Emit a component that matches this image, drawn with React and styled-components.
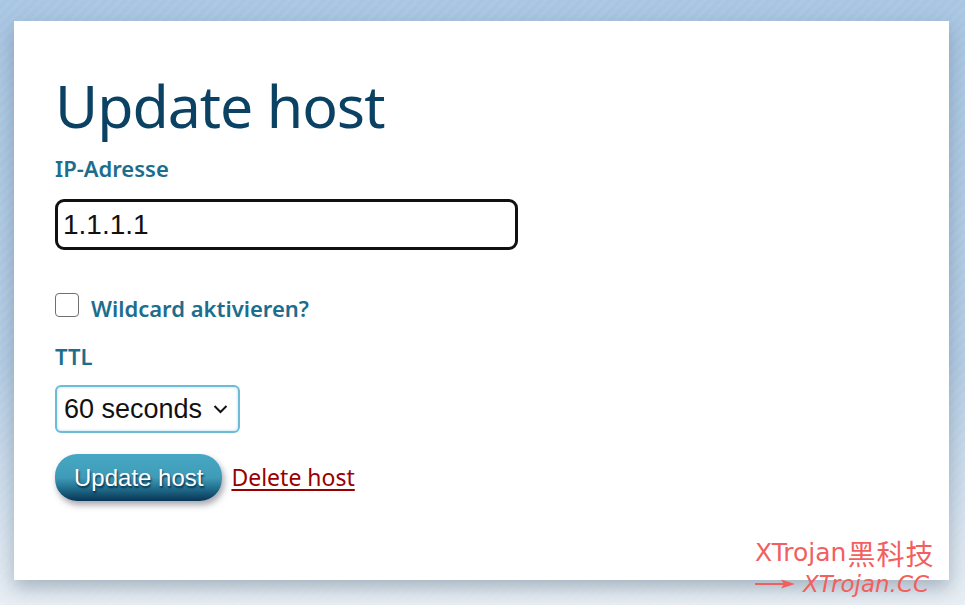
import React from 'react';
import styled, { createGlobalStyle } from 'styled-components';

const GlobalStyle = createGlobalStyle`
  html, body {
    margin: 0;
    padding: 0;
    height: 100%;
  }
  body {
    font-family: "Noto Sans", "Open Sans", sans-serif;
    background:
      repeating-linear-gradient(135deg, rgba(255,255,255,0.06) 0 3px, rgba(255,255,255,0) 3px 7px),
      linear-gradient(180deg, #a8c5e2 0%, #b3cce4 60%, #e8eef4 100%);
    overflow: hidden;
  }
`;

const Page = styled.div`
  width: 965px;
  height: 605px;
  padding: 21px 16px 0 14px;
  box-sizing: border-box;
  position: relative;
`;

const Card = styled.main`
  background: #ffffff;
  height: 559px;
  box-sizing: border-box;
  padding: 49px 41px 0;
  box-shadow: 0 8px 18px rgba(90, 110, 130, 0.45);
`;

const Title = styled.h1`
  margin: 0 0 14px;
  font-family: "Noto Sans", sans-serif;
  font-weight: 400;
  font-size: 59px;
  line-height: 70px;
  letter-spacing: -1px;
  color: #0b4263;
`;

const Label = styled.label`
  display: block;
  font-family: "Noto Sans", sans-serif;
  font-weight: 600;
  font-size: 22px;
  line-height: 28px;
  color: #1d6d8d;
  margin-top: ${p => p.$top || 0}px;
`;

const TextInput = styled.input`
  display: block;
  width: 463px;
  height: 51px;
  box-sizing: border-box;
  margin-top: 17px;
  border: 3.5px solid #111;
  border-radius: 9px;
  padding: 0 5px;
  font-family: "Liberation Sans", Arial, sans-serif;
  font-size: 28px;
  color: #111;
  outline: none;
`;

const CheckRow = styled.div`
  display: flex;
  align-items: flex-start;
  gap: 12px;
  margin-top: 44px;
`;

const Checkbox = styled.span`
  width: 24px;
  height: 24px;
  border: 1.5px solid #707070;
  border-radius: 4px;
  box-sizing: border-box;
  margin-top: -1px;
`;

const CheckLabel = styled(Label)`
  margin: 0;
`;

const Select = styled.div`
  display: inline-flex;
  align-items: center;
  gap: 11px;
  margin-top: 15px;
  height: 48px;
  box-sizing: border-box;
  border: 2px solid #6cbcd8;
  border-radius: 6px;
  padding: 0 10px 0 7px;
  font-family: "Liberation Sans", Arial, sans-serif;
  font-size: 27px;
  color: #111;
  box-shadow: inset 0 0 3px rgba(108, 188, 216, 0.6);
`;

const Actions = styled.div`
  display: flex;
  align-items: center;
  gap: 9px;
  margin-top: 21px;
`;

const Button = styled.button`
  height: 47px;
  padding: 0 19px;
  border: none;
  border-radius: 22px;
  background: linear-gradient(180deg, #47a7c2 0%, #3f9cb8 50%, #23718f 72%, #083555 100%);
  color: #fff;
  font-family: "Liberation Sans", Arial, sans-serif;
  font-size: 24px;
  text-shadow: 1px 2px 2px rgba(0, 40, 70, 0.9);
  box-shadow: 2px 4px 6px rgba(60, 60, 80, 0.45);
`;

const DeleteLink = styled.a`
  font-family: "Noto Sans", sans-serif;
  font-size: 23px;
  color: #990000;
  text-decoration: underline;
  text-underline-offset: 3px;
  margin-top: -2px;
`;

const Watermark = styled.div`
  position: absolute;
  left: 755px;
  top: 537px;
  color: #f25f5f;
  font-family: "DejaVu Sans", "Noto Sans CJK SC", sans-serif;
`;

const MarkLine = styled.div`
  display: flex;
  align-items: center;
  gap: ${p => (p.$italic ? 8 : 0)}px;
  height: 31px;
  font-size: ${p => (p.$italic ? 23 : 25)}px;
  font-style: ${p => (p.$italic ? 'italic' : 'normal')};
  white-space: nowrap;
`;

const Cjk = styled.span`
  font-family: "Noto Sans CJK SC", sans-serif;
  font-size: 28px;
  letter-spacing: 1px;
  margin-left: 1px;
`;

const Chevron = () => (
  <svg width="15" height="10" viewBox="0 0 15 10">
    <path d="M1.5 2 L7.5 8 L13.5 2" fill="none" stroke="#111" strokeWidth="2" />
  </svg>
);

const Arrow = () => (
  <svg width="40" height="12" viewBox="0 0 40 12">
    <path d="M0 6 H34" stroke="#f25f5f" strokeWidth="2" />
    <path d="M26 1.5 L40 6 L26 10.5 L29 6 Z" fill="#f25f5f" />
  </svg>
);

export default function App() {
  return (
    <>
      <GlobalStyle />
      <Page>
        <Card>
          <Title>Update host</Title>
          <Label>IP-Adresse</Label>
          <TextInput defaultValue="1.1.1.1" />
          <CheckRow>
            <Checkbox />
            <CheckLabel>Wildcard aktivieren?</CheckLabel>
          </CheckRow>
          <Label $top={20}>TTL</Label>
          <Select>
            <span>60 seconds</span>
            <Chevron />
          </Select>
          <Actions>
            <Button>Update host</Button>
            <DeleteLink href="#">Delete host</DeleteLink>
          </Actions>
        </Card>
        <Watermark>
          <MarkLine>
            <span>XTrojan</span>
            <Cjk>黑科技</Cjk>
          </MarkLine>
          <MarkLine $italic>
            <Arrow />
            XTrojan.CC
          </MarkLine>
        </Watermark>
      </Page>
    </>
  );
}
